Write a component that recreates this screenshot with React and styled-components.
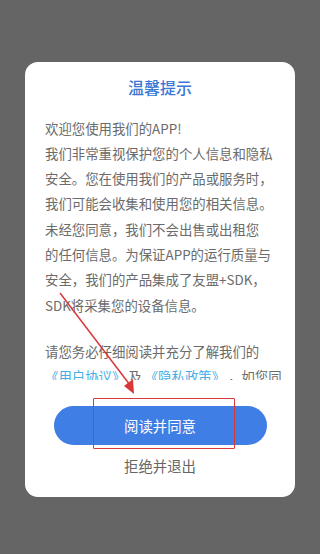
import React from "react";
import styled, { createGlobalStyle } from "styled-components";

const GlobalStyle = createGlobalStyle`
  html, body {
    margin: 0;
    padding: 0;
    background: #656565;
  }
  * { box-sizing: border-box; }
`;

const Screen = styled.div`
  position: relative;
  width: 320px;
  height: 554px;
  background: #656565;
  padding-top: 62px;
  display: flex;
  justify-content: center;
  align-items: flex-start;
  font-family: "Noto Sans CJK SC", "Noto Sans", sans-serif;
  overflow: hidden;
`;

const Card = styled.div`
  width: 270px;
  background: #fff;
  border-radius: 13px;
  padding: 13px 0 21px;
  display: flex;
  flex-direction: column;
  align-items: center;
`;

const Title = styled.h2`
  margin: 0;
  font-size: 16px;
  line-height: 24px;
  font-weight: 500;
  color: #3a78d4;
`;

const Scroll = styled.div`
  width: 100%;
  height: 277px;
  margin-top: 4px;
  padding: 12.5px 20px 0;
  overflow: hidden;
`;

const Para = styled.p`
  margin: ${({ $gap }) => ($gap ? "21px" : "0")} 0 0;
  font-size: 13.4px;
  line-height: 25.3px;
  color: #6b6b6b;
  white-space: nowrap;
`;

const Link = styled.span`
  color: #45aee6;
`;

const AgreeButton = styled.button`
  margin-top: 26px;
  width: 213px;
  height: 39px;
  border: none;
  border-radius: 20px;
  background: #3f7ee5;
  color: #fff;
  font-family: inherit;
  font-size: 14.4px;
  padding: 0;
`;

const Decline = styled.div`
  margin-top: 11px;
  font-size: 14.4px;
  line-height: 20px;
  color: #666;
`;

const Highlight = styled.div`
  position: absolute;
  left: 93px;
  top: 398px;
  width: 142px;
  height: 51px;
  border: 1.5px solid #d8383a;
  border-radius: 1px;
  pointer-events: none;
`;

const Arrow = styled.svg`
  position: absolute;
  left: 0;
  top: 0;
  pointer-events: none;
`;

export default function App() {
  return (
    <>
      <GlobalStyle />
      <Screen>
        <Card>
          <Title>温馨提示</Title>
          <Scroll>
            <Para>
              欢迎您使用我们的APP!
              <br />
              我们非常重视保护您的个人信息和隐私
              <br />
              安全。您在使用我们的产品或服务时，
              <br />
              我们可能会收集和使用您的相关信息。
              <br />
              未经您同意，我们不会出售或出租您
              <br />
              的任何信息。为保证APP的运行质量与
              <br />
              安全，我们的产品集成了友盟+SDK，
              <br />
              SDK将采集您的设备信息。
            </Para>
            <Para $gap>
              请您务必仔细阅读并充分了解我们的
              <br />
              <Link>《用户协议》</Link> 及 <Link>《隐私政策》</Link> ，如您同
            </Para>
          </Scroll>
          <AgreeButton>阅读并同意</AgreeButton>
          <Decline>拒绝并退出</Decline>
        </Card>
        <Highlight />
        <Arrow width="320" height="554" viewBox="0 0 320 554">
          <line x1="60" y1="293" x2="130" y2="385" stroke="#d8383a" strokeWidth="1.5" />
          <polygon points="134,394 124,386 133,379" fill="#d8383a" />
        </Arrow>
      </Screen>
    </>
  );
}
